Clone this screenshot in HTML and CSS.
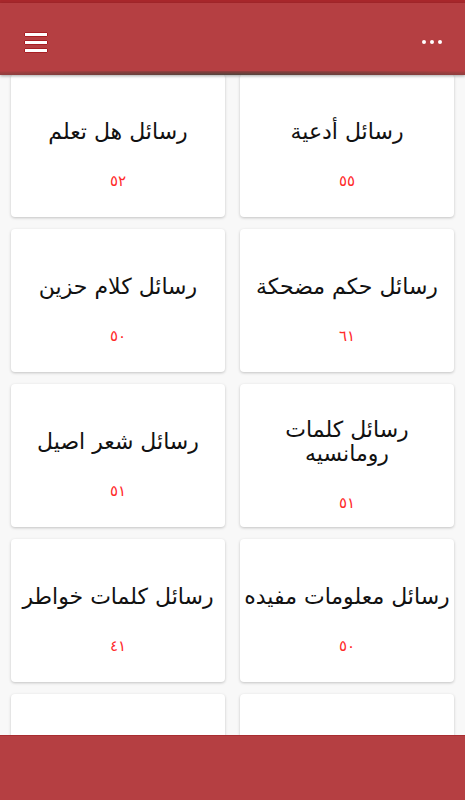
FILE: index.html
```html
<!DOCTYPE html>
<html lang="ar">
<head>
<meta charset="utf-8">
<link rel="stylesheet" href="styles.css">
</head>
<body>
<div class="app">
  <div class="status"></div>
  <header class="toolbar">
    <div class="menu">
      <span class="bar"></span><span class="bar"></span><span class="bar"></span>
    </div>
    <div class="dots"><span></span><span></span><span></span></div>
  </header>
  <main class="content">
    <div class="grid" dir="rtl">
      <div class="card"><div class="title">رسائل أدعية</div><div class="num">٥٥</div></div>
      <div class="card"><div class="title">رسائل هل تعلم</div><div class="num">٥٢</div></div>
      <div class="card"><div class="title">رسائل حكم مضحكة</div><div class="num">٦١</div></div>
      <div class="card"><div class="title">رسائل كلام حزين</div><div class="num">٥٠</div></div>
      <div class="card"><div class="title">رسائل كلمات رومانسيه</div><div class="num">٥١</div></div>
      <div class="card"><div class="title">رسائل شعر اصيل</div><div class="num">٥١</div></div>
      <div class="card"><div class="title">رسائل معلومات مفيده</div><div class="num">٥٠</div></div>
      <div class="card"><div class="title">رسائل كلمات خواطر</div><div class="num">٤١</div></div>
      <div class="card"></div>
      <div class="card"></div>
    </div>
  </main>
  <footer class="bottom"></footer>
</div>
</body>
</html>
```
FILE: styles.css
```css
html, body {
  margin: 0;
  padding: 0;
}
body {
  font-family: "DejaVu Sans", sans-serif;
  background: #f8f8f8;
}
.app {
  width: 465px;
  height: 800px;
  display: flex;
  flex-direction: column;
  overflow: hidden;
}
.status {
  height: 3px;
  background: #a9282c;
  flex: none;
}
.toolbar {
  height: 72px;
  flex: none;
  background: #b53f42;
  display: flex;
  align-items: center;
  justify-content: space-between;
  padding: 0 23px 0 24px;
  position: relative;
  z-index: 2;
  box-shadow: 0 1px 3px rgba(0,0,0,0.35);
}
.toolbar::after {
  content: "";
  position: absolute;
  left: 0;
  right: 0;
  bottom: 0;
  height: 4px;
  background: radial-gradient(ellipse at center bottom, rgba(70,70,60,0.9) 0%, rgba(90,60,55,0.6) 50%, rgba(181,63,66,0) 100%);
}
.menu {
  display: flex;
  flex-direction: column;
  gap: 3px;
  margin-top: 6px;
}
.bar {
  display: block;
  width: 22px;
  height: 3px;
  background: #fff;
  border: 1px solid #a81f24;
  border-radius: 1px;
}
.dots {
  display: flex;
  gap: 4px;
  margin-top: 6px;
}
.dots span {
  width: 4px;
  height: 4px;
  border-radius: 50%;
  background: #fff;
}
.content {
  flex: 1;
  overflow: hidden;
  background: #f8f8f8;
}
.grid {
  display: grid;
  grid-template-columns: 214px 214px;
  column-gap: 15px;
  row-gap: 12px;
  padding: 0 11px;
  margin-top: -1px;
}
.card {
  height: 143px;
  box-sizing: border-box;
  padding-top: 20px;
  background: #fff;
  border-radius: 4px;
  box-shadow: 0 1px 3px rgba(0,0,0,0.22);
  display: flex;
  flex-direction: column;
  align-items: center;
  justify-content: center;
  text-align: center;
}
.title {
  font-size: 22px;
  line-height: 24px;
  color: #111;
  padding: 0 4px;
}
.num {
  font-size: 15px;
  line-height: 20px;
  color: #ff2a2a;
  margin-top: 27px;
}
.bottom {
  height: 65px;
  flex: none;
  background: #b53f42;
  border-top: 1px solid #a82d31;
  box-sizing: border-box;
  position: relative;
  z-index: 2;
}
```
